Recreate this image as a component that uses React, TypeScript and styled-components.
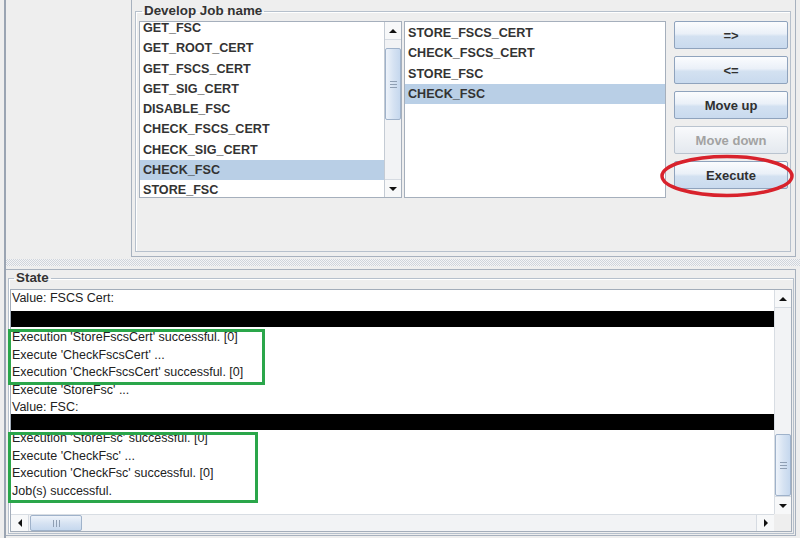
import styled, { createGlobalStyle } from 'styled-components';

const GlobalStyle = createGlobalStyle`
  html, body {
    margin: 0;
    padding: 0;
    background: #eeeeee;
  }
  body {
    font-family: 'Liberation Sans', Arial, sans-serif;
  }
  * {
    box-sizing: border-box;
  }
`;

const availableJobs = [
  'GET_FSC',
  'GET_ROOT_CERT',
  'GET_FSCS_CERT',
  'GET_SIG_CERT',
  'DISABLE_FSC',
  'CHECK_FSCS_CERT',
  'CHECK_SIG_CERT',
  'CHECK_FSC',
  'STORE_FSC',
];

const selectedJobs = ['STORE_FSCS_CERT', 'CHECK_FSCS_CERT', 'STORE_FSC', 'CHECK_FSC'];

type LogEntry =
  | { kind: 'text'; text: string }
  | { kind: 'bar'; before: number; after: number };

const log: LogEntry[] = [
  { kind: 'text', text: 'Value: FSCS Cert:' },
  { kind: 'bar', before: 3.5, after: 2.25 },
  { kind: 'text', text: "Execution 'StoreFscsCert' successful. [0]" },
  { kind: 'text', text: "Execute 'CheckFscsCert' ..." },
  { kind: 'text', text: "Execution 'CheckFscsCert' successful. [0]" },
  { kind: 'text', text: "Execute 'StoreFsc' ..." },
  { kind: 'text', text: 'Value: FSC:' },
  { kind: 'bar', before: -2.75, after: 0.25 },
  { kind: 'text', text: "Execution 'StoreFsc' successful. [0]" },
  { kind: 'text', text: "Execute 'CheckFsc' ..." },
  { kind: 'text', text: "Execution 'CheckFsc' successful. [0]" },
  { kind: 'text', text: 'Job(s) successful.' },
];

const buttons = [
  { label: '=>', disabled: false },
  { label: '<=', disabled: false },
  { label: 'Move up', disabled: false },
  { label: 'Move down', disabled: true },
  { label: 'Execute', disabled: false },
];

const Frame = styled.div`
  position: relative;
  width: 800px;
  height: 538px;
  overflow: hidden;
  padding-left: 4px;
  display: flex;
  background: #eeeeee;
`;

const Window = styled.div`
  flex: 1;
  display: flex;
  flex-direction: column;
  border-left: 2px solid #9aa4b2;
`;

const TopPane = styled.div`
  height: 259px;
  flex-shrink: 0;
  display: flex;
`;

const SidePane = styled.div`
  width: 125px;
  flex-shrink: 0;
`;

const JobPanel = styled.div`
  width: 665px;
  height: 257px;
  flex-shrink: 0;
  display: flex;
  border: 1px solid #a7b1be;
  border-top: none;
  padding: 3px 4px 4px 3px;
`;

const Group = styled.fieldset`
  flex: 1;
  min-width: 0;
  margin: 0;
  padding: 2px 2px 0 3px;
  border: 1px solid #b6c0cc;
  box-shadow: inset 1px 1px 0 #ffffff;
  display: flex;
  flex-direction: column;
`;

const Title = styled.legend`
  margin-left: 3px;
  padding: 0 2px;
  font-size: 13.4px;
  font-weight: bold;
  line-height: 16px;
  color: #333333;
`;

const JobRow = styled.div`
  display: flex;
  align-items: flex-start;
  gap: 2px;
`;

const ListBox = styled.div<{ $width: number }>`
  width: ${(p) => p.$width}px;
  height: 177px;
  flex-shrink: 0;
  display: flex;
  background: #ffffff;
  border: 1px solid #a5afbc;
`;

const ListView = styled.div`
  flex: 1;
  overflow: hidden;
`;

const ListInner = styled.div<{ $shift: number }>`
  margin-top: ${(p) => p.$shift}px;
`;

const ListRow = styled.div<{ $selected?: boolean }>`
  height: 20.3px;
  line-height: 20.3px;
  padding-left: 3px;
  font-size: 12.6px;
  font-weight: bold;
  color: #333333;
  white-space: nowrap;
  background: ${(p) => (p.$selected ? '#b9cfe6' : 'transparent')};
`;

const ButtonColumn = styled.div`
  width: 114px;
  margin-left: 6px;
  display: flex;
  flex-direction: column;
  gap: 7px;
`;

const ActionButton = styled.button`
  height: 28px;
  padding: 0;
  border: 1px solid #8fa3bd;
  border-radius: 2px;
  background: linear-gradient(#fbfcfe 0%, #eaf0f8 45%, #d3e1f1 55%, #c9daee 100%);
  font-family: 'Liberation Sans', Arial, sans-serif;
  font-size: 13px;
  font-weight: bold;
  color: #303030;

  &:disabled {
    border-color: #b9c3cf;
    background: linear-gradient(#f9fafc 0%, #eef1f5 50%, #e4e9ef 100%);
    color: #a2a2a2;
  }
`;

const Divider = styled.div`
  height: 7px;
  flex-shrink: 0;
  background: repeating-conic-gradient(#cfd4db 0 25%, #f3f4f6 0 50%) 0 0 / 2px 2px;
`;

const BottomPanel = styled.div`
  flex: 1;
  display: flex;
  margin: 3px 4px 2px 0;
  border: 1px solid #a7b1be;
  border-left: none;
  padding: 0 1px 1px 2px;
`;

const StateGroup = styled(Group)`
  padding: 3px 1px 1px 1px;
`;

const StateTitle = styled(Title)`
  margin-left: 4px;
`;

const ScrollPane = styled.div`
  flex: 1;
  display: grid;
  grid-template-columns: 1fr 17px;
  grid-template-rows: 1fr 17px;
  border: 1px solid #a3adba;
  background: #ffffff;
`;

const LogView = styled.div`
  overflow: hidden;
  padding-left: 1px;
  background: #ffffff;
`;

const LogLine = styled.div`
  height: 17.5px;
  line-height: 17.5px;
  font-size: 12.5px;
  color: #222222;
  white-space: nowrap;
`;

const Redacted = styled.div<{ $before: number; $after: number }>`
  height: 16px;
  margin: ${(p) => p.$before}px 0 ${(p) => p.$after}px -1px;
  background: #000000;
`;

const VBar = styled.div<{ $inList?: boolean }>`
  width: 17px;
  flex-shrink: 0;
  display: flex;
  flex-direction: column;
  background: #f2f3f5;
  border-left: 1px solid ${(p) => (p.$inList ? '#c4cbd4' : '#d8dde3')};
`;

const HBar = styled.div`
  display: flex;
  background: #f2f3f5;
  border-top: 1px solid #d8dde3;
`;

const Corner = styled.div`
  background: #eeeeee;
`;

const ArrowButton = styled.div<{ $horizontal?: boolean }>`
  ${(p) => (p.$horizontal ? 'width: 17px;' : 'height: 17px;')}
  flex-shrink: 0;
  display: flex;
  align-items: center;
  justify-content: center;
  background: #f7f8f9;
`;

const Arrow = styled.span<{ $dir: 'up' | 'down' | 'left' | 'right' }>`
  width: 0;
  height: 0;
  ${(p) =>
    p.$dir === 'up'
      ? 'border-left: 4px solid transparent; border-right: 4px solid transparent; border-bottom: 4px solid #111;'
      : p.$dir === 'down'
        ? 'border-left: 4px solid transparent; border-right: 4px solid transparent; border-top: 4px solid #111;'
        : p.$dir === 'left'
          ? 'border-top: 4px solid transparent; border-bottom: 4px solid transparent; border-right: 4px solid #111;'
          : 'border-top: 4px solid transparent; border-bottom: 4px solid transparent; border-left: 4px solid #111;'}
`;

const Track = styled.div<{ $horizontal?: boolean }>`
  flex: 1;
  display: flex;
  flex-direction: ${(p) => (p.$horizontal ? 'row' : 'column')};
  border-${(p) => (p.$horizontal ? 'left' : 'top')}: 1px solid #d6dbe2;
  border-${(p) => (p.$horizontal ? 'right' : 'bottom')}: 1px solid #d6dbe2;
`;

const Thumb = styled.div<{ $horizontal?: boolean; $offset: number; $size: number; $end?: boolean }>`
  ${(p) =>
    p.$horizontal
      ? `width: ${p.$size}px; margin-left: ${p.$offset}px; flex-direction: row;`
      : `height: ${p.$size}px; margin-top: ${p.$end ? 'auto' : `${p.$offset}px`}; flex-direction: column;`}
  flex-shrink: 0;
  display: flex;
  align-items: center;
  justify-content: center;
  gap: 2px;
  border: 1px solid #9fb2ca;
  border-radius: 2px;
  background: ${(p) =>
    p.$horizontal
      ? 'linear-gradient(#eef3fa, #d5e2f2 55%, #c6d8ee)'
      : 'linear-gradient(90deg, #eef3fa, #d5e2f2 55%, #c6d8ee)'};
`;

const Grip = styled.span<{ $horizontal?: boolean }>`
  ${(p) => (p.$horizontal ? 'width: 1px; height: 7px;' : 'width: 7px; height: 1px;')}
  background: #8f9fb3;
`;

const Annotation = styled.div<{ $x: number; $y: number; $w: number; $h: number }>`
  position: absolute;
  left: ${(p) => p.$x}px;
  top: ${(p) => p.$y}px;
  width: ${(p) => p.$w}px;
  height: ${(p) => p.$h}px;
  border: 3px solid #2aa64a;
  pointer-events: none;
`;

const EllipseMark = styled.svg`
  position: absolute;
  left: 659px;
  top: 154px;
  width: 136px;
  height: 44px;
  pointer-events: none;
`;

const Grips = ({ horizontal }: { horizontal?: boolean }) => (
  <>
    <Grip $horizontal={horizontal} />
    <Grip $horizontal={horizontal} />
    <Grip $horizontal={horizontal} />
  </>
);

const VerticalScroll = ({
  offset,
  size,
  end,
  inList,
}: {
  offset: number;
  size: number;
  end?: boolean;
  inList?: boolean;
}) => (
  <VBar $inList={inList}>
    <ArrowButton>
      <Arrow $dir="up" />
    </ArrowButton>
    <Track>
      <Thumb $offset={offset} $size={size} $end={end}>
        <Grips />
      </Thumb>
    </Track>
    <ArrowButton>
      <Arrow $dir="down" />
    </ArrowButton>
  </VBar>
);

const App = () => {
  return (
    <>
      <GlobalStyle />
      <Frame>
        <Window>
          <TopPane>
            <SidePane />
            <JobPanel>
              <Group>
                <Title>Develop Job name</Title>
                <JobRow>
                  <ListBox $width={263}>
                    <ListView>
                      <ListInner $shift={-4}>
                        {availableJobs.map((job) => (
                          <ListRow key={job} $selected={job === 'CHECK_FSC'}>
                            {job}
                          </ListRow>
                        ))}
                      </ListInner>
                    </ListView>
                    <VerticalScroll offset={8} size={72} inList />
                  </ListBox>
                  <ListBox $width={262}>
                    <ListView>
                      <ListInner $shift={1}>
                        {selectedJobs.map((job) => (
                          <ListRow key={job} $selected={job === 'CHECK_FSC'}>
                            {job}
                          </ListRow>
                        ))}
                      </ListInner>
                    </ListView>
                  </ListBox>
                  <ButtonColumn>
                    {buttons.map((b) => (
                      <ActionButton key={b.label} disabled={b.disabled}>
                        {b.label}
                      </ActionButton>
                    ))}
                  </ButtonColumn>
                </JobRow>
              </Group>
            </JobPanel>
          </TopPane>
          <Divider />
          <BottomPanel>
            <StateGroup>
              <StateTitle>State</StateTitle>
              <ScrollPane>
                <LogView>
                  {log.map((entry, i) =>
                    entry.kind === 'text' ? (
                      <LogLine key={i}>{entry.text}</LogLine>
                    ) : (
                      <Redacted key={i} $before={entry.before} $after={entry.after} />
                    ),
                  )}
                </LogView>
                <VerticalScroll offset={0} size={62} end />
                <HBar>
                  <ArrowButton $horizontal>
                    <Arrow $dir="left" />
                  </ArrowButton>
                  <Track $horizontal>
                    <Thumb $horizontal $offset={1} $size={52}>
                      <Grips horizontal />
                    </Thumb>
                  </Track>
                  <ArrowButton $horizontal>
                    <Arrow $dir="right" />
                  </ArrowButton>
                </HBar>
                <Corner />
              </ScrollPane>
            </StateGroup>
          </BottomPanel>
        </Window>
        <Annotation $x={8} $y={329} $w={257} $h={56} />
        <Annotation $x={8} $y={432} $w={250} $h={71} />
        <EllipseMark viewBox="0 0 136 44">
          <ellipse cx="68" cy="22" rx="65" ry="19.5" fill="none" stroke="#d8222c" strokeWidth="3.5" />
        </EllipseMark>
      </Frame>
    </>
  );
};

export default App;
